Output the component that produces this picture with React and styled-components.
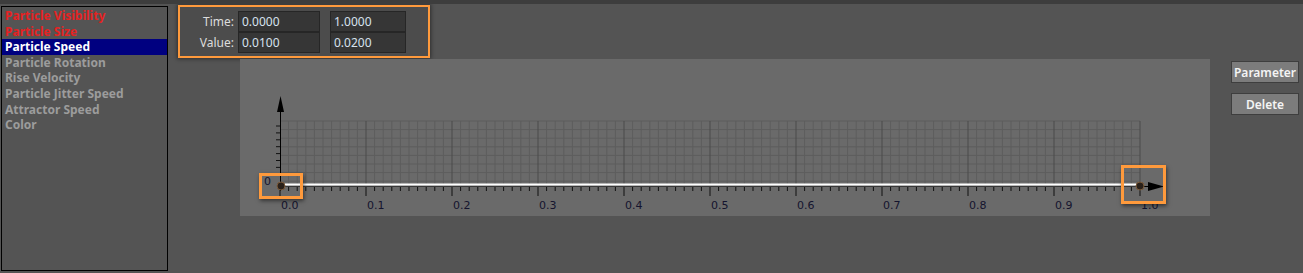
import React from "react";
import styled, { createGlobalStyle } from "styled-components";

const GlobalStyle = createGlobalStyle`
  html, body {
    margin: 0;
    padding: 0;
    background: #545454;
    font-family: "Noto Sans", "Open Sans", sans-serif;
  }
`;

const Window = styled.div`
  width: 1303px;
  height: 273px;
  background: #545454;
  border-top: 4px solid #3d3d3d;
  box-sizing: border-box;
  display: flex;
  overflow: hidden;
`;

const ListBox = styled.ul`
  list-style: none;
  margin: 2px 0 0 1px;
  padding: 1px 0 0;
  width: 165px;
  height: 262px;
  border: 1px solid #000;
  background: #545454;
  flex-shrink: 0;
`;

const ListItem = styled.li`
  height: 15.6px;
  line-height: 15.6px;
  padding-left: 3px;
  font-size: 12px;
  font-weight: 700;
  white-space: nowrap;
  color: ${(p) => (p.$active ? "#ffffff" : p.$used ? "#e52222" : "#9c9c9c")};
  background: ${(p) => (p.$active ? "#000080" : "transparent")};
`;

const Main = styled.div`
  flex: 1;
  display: flex;
  flex-direction: column;
`;

const KeyPanel = styled.div`
  margin: 1px 0 0 10px;
  width: 248px;
  height: 49px;
  border: 2px solid #ff9a3c;
  background: #4c4c4c;
  box-shadow: 0 0 4px 1px rgba(0, 0, 0, 0.45);
  display: grid;
  grid-template-columns: 54px 82px 82px;
  grid-template-rows: 21px 21px;
  column-gap: 4px;
  align-content: center;
  padding-left: 0;
  box-sizing: content-box;
`;

const KeyLabel = styled.div`
  font-size: 12px;
  color: #dcdcdc;
  text-align: right;
  line-height: 21px;
`;

const KeyField = styled.div`
  background: #363636;
  border: 1px solid #262626;
  font-size: 12px;
  color: #d6e2ee;
  line-height: 19px;
  padding-left: 3px;
  margin-left: ${(p) => (p.$second ? "6px" : "0")};
`;

const GraphRow = styled.div`
  display: flex;
  margin-top: 1px;
  padding-left: 72px;
`;

const GraphPanel = styled.div`
  position: relative;
  width: 970px;
  height: 157px;
  background: #6a6a6a;
  flex-shrink: 0;
`;

const Highlight = styled.div`
  position: absolute;
  border: 3px solid #ff9a3c;
  box-sizing: border-box;
  box-shadow: 1px 2px 4px rgba(0, 0, 0, 0.5);
`;

const Side = styled.div`
  display: flex;
  flex-direction: column;
  gap: 10px;
  padding: 2px 0 0 21px;
`;

const SideButton = styled.button`
  width: 68px;
  height: 22px;
  padding: 0;
  background: #7c7c7c;
  border: 1px solid #3e3e3e;
  color: #f4f4f4;
  font-family: "Noto Sans", "Open Sans", sans-serif;
  font-size: 12px;
  font-weight: 600;
  cursor: pointer;
`;

const params = [
  { name: "Particle Visibility", used: true },
  { name: "Particle Size", used: true },
  { name: "Particle Speed", active: true },
  { name: "Particle Rotation" },
  { name: "Rise Velocity" },
  { name: "Particle Jitter Speed" },
  { name: "Attractor Speed" },
  { name: "Color" },
];

const X0 = 40;
const X1 = 900;
const GY0 = 62;
const AXY = 126;
const STEP = (X1 - X0) / 100;

const Curve = () => {
  const minor = [];
  for (let i = 0; i <= 100; i++) {
    const x = X0 + i * STEP;
    const major = i % 10 === 0;
    if (i > 0) {
      minor.push(
        <line
          key={"g" + i}
          x1={x}
          y1={GY0}
          x2={x}
          y2={AXY}
          stroke={major ? "#4a4a4a" : "#5d5d5d"}
          strokeWidth="1"
        />
      );
    }
    minor.push(
      <line
        key={"t" + i}
        x1={x}
        y1={AXY + 2}
        x2={x}
        y2={major ? AXY + 11 : AXY + 6}
        stroke="#111"
        strokeWidth="1"
      />
    );
  }
  const rows = [];
  for (let j = 0; j < 8; j++) {
    const y = GY0 + j * 8.6;
    rows.push(
      <line key={"h" + j} x1={X0} y1={y} x2={X1} y2={y} stroke="#5d5d5d" strokeWidth="1" />
    );
  }
  const yTicks = [];
  for (let j = 0; j < 8; j++) {
    const y = 67 + j * 6.9;
    yTicks.push(<line key={"y" + j} x1={36} y1={y} x2={X0} y2={y} stroke="#111" strokeWidth="1" />);
  }
  const labels = [];
  for (let i = 0; i <= 10; i++) {
    labels.push(
      <text
        key={"l" + i}
        x={X0 + i * STEP * 10 + 1}
        y={150}
        fontSize="11"
        fill="#14142e"
        fontFamily="'DejaVu Sans', sans-serif"
      >
        {(i / 10).toFixed(1)}
      </text>
    );
  }
  return (
    <svg width="970" height="157" style={{ display: "block" }}>
      {rows}
      {minor}
      <line x1={X0 + 0.5} y1={50} x2={X0 + 0.5} y2={132} stroke="#000" strokeWidth="1" />
      <polygon points={`${X0 + 0.5},37 ${X0 - 3},53 ${X0 + 4},53`} fill="#000" />
      {yTicks}
      <text x={24} y={126} fontSize="11" fill="#14142e" fontFamily="'DejaVu Sans', sans-serif">
        0
      </text>
      <line x1={X0} y1={AXY + 1.5} x2={920} y2={AXY + 1.5} stroke="#000" strokeWidth="1" />
      <line x1={X0} y1={AXY - 0.5} x2={X1} y2={AXY - 0.5} stroke="#ffffff" strokeWidth="2" />
      <line x1={X0} y1={AXY + 0.8} x2={X1} y2={AXY + 0.8} stroke="#bdbdbd" strokeWidth="1" />
      <polygon points={`908,${AXY - 3} 924,${AXY + 1.5} 908,${AXY + 6}`} fill="#000" />
      {labels}
      <circle cx={X0 + 1} cy={127} r={4} fill="#2a211a" stroke="#7c5c3c" strokeWidth="1" />
      <circle cx={X1} cy={127} r={4} fill="#2a211a" stroke="#7c5c3c" strokeWidth="1" />
    </svg>
  );
};

const App = () => {
  return (
    <>
      <GlobalStyle />
      <Window>
        <ListBox>
          {params.map((p) => (
            <ListItem key={p.name} $active={p.active} $used={p.used}>
              {p.name}
            </ListItem>
          ))}
        </ListBox>
        <Main>
          <KeyPanel>
            <KeyLabel>Time:</KeyLabel>
            <KeyField>0.0000</KeyField>
            <KeyField $second>1.0000</KeyField>
            <KeyLabel>Value:</KeyLabel>
            <KeyField>0.0100</KeyField>
            <KeyField $second>0.0200</KeyField>
          </KeyPanel>
          <GraphRow>
            <GraphPanel>
              <Curve />
              <Highlight style={{ left: 19, top: 114, width: 44, height: 26 }} />
              <Highlight style={{ left: 881, top: 106, width: 45, height: 39 }} />
            </GraphPanel>
            <Side>
              <SideButton>Parameter</SideButton>
              <SideButton>Delete</SideButton>
            </Side>
          </GraphRow>
        </Main>
      </Window>
    </>
  );
};

export default App;
